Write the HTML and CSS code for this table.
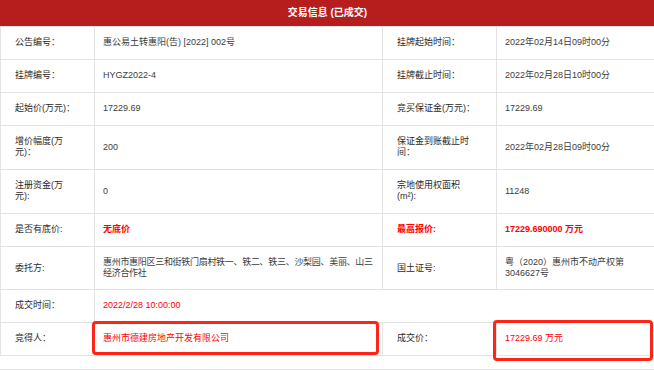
FILE: index.html
```html
<!DOCTYPE html>
<html lang="zh-CN">
<head>
<meta charset="utf-8">
<title>交易信息</title>
<link rel="stylesheet" href="styles.css">
</head>
<body>
<div class="panel">
  <div class="title">交易信息 (已成交)</div>
  <table class="info">
    <colgroup><col class="c1"><col class="c2"><col class="c3"><col class="c4"></colgroup>
    <tr>
      <td class="lab">公告编号：</td>
      <td class="val">惠公易土转惠阳(告) [2022] 002号</td>
      <td class="lab">挂牌起始时间：</td>
      <td class="val">2022年02月14日09时00分</td>
    </tr>
    <tr>
      <td class="lab">挂牌编号：</td>
      <td class="val">HYGZ2022-4</td>
      <td class="lab">挂牌截止时间：</td>
      <td class="val">2022年02月28日10时00分</td>
    </tr>
    <tr>
      <td class="lab">起始价(万元)：</td>
      <td class="val">17229.69</td>
      <td class="lab">竞买保证金(万元)：</td>
      <td class="val">17229.69</td>
    </tr>
    <tr>
      <td class="lab">增价幅度(万<br>元)：</td>
      <td class="val">200</td>
      <td class="lab">保证金到账截止时<br>间：</td>
      <td class="val">2022年02月28日09时00分</td>
    </tr>
    <tr>
      <td class="lab">注册资金(万<br>元):</td>
      <td class="val">0</td>
      <td class="lab">宗地使用权面积<br>(m²):</td>
      <td class="val">11248</td>
    </tr>
    <tr>
      <td class="lab">是否有底价:</td>
      <td class="val red bold">无底价</td>
      <td class="lab red bold">最高报价:</td>
      <td class="val red bold">17229.690000 万元</td>
    </tr>
    <tr class="tight">
      <td class="lab">委托方:</td>
      <td class="val narrow">惠州市惠阳区三和街铁门扇村铁一、铁二、铁三、沙梨园、美丽、山三<br>经济合作社</td>
      <td class="lab">国土证号:</td>
      <td class="val">粤（2020）惠州市不动产权第<br>3046627号</td>
    </tr>
    <tr>
      <td class="lab">成交时间：</td>
      <td class="val red" colspan="3">2022/2/28 10:00:00</td>
    </tr>
    <tr>
      <td class="lab">竞得人：</td>
      <td class="val red mark"><span class="box box-a"></span>惠州市德建房地产开发有限公司</td>
      <td class="lab">成交价：</td>
      <td class="val red mark"><span class="box box-b"></span>17229.69 万元</td>
    </tr>
  </table>
  <div class="tail"></div>
</div>
</body>
</html>
```

FILE: styles.css
```css
html, body {
  margin: 0;
  padding: 0;
  background: #ffffff;
  overflow: hidden;
}

.panel {
  width: 655px;
  font-family: "Liberation Sans", "Noto Sans CJK SC", sans-serif;
  font-size: 9px;
  color: #333333;
}

.title {
  height: 26px;
  line-height: 26px;
  background: #b51e1c;
  color: #ffffff;
  font-weight: bold;
  font-size: 10px;
  text-align: center;
}

.info {
  width: 655px;
  table-layout: fixed;
  border-collapse: collapse;
}

.c1 { width: 94px; }
.c2 { width: 288px; }
.c3 { width: 114px; }
.c4 { width: 159px; }

.info td {
  border: 1px solid #e3e3e3;
  line-height: 11px;
  padding: 10px 8px 11px 8px;
  vertical-align: middle;
  white-space: nowrap;
}

.info tr.tight td {
  padding-top: 10px;
  padding-bottom: 10px;
}

.info td.lab {
  padding-left: 14px;
  color: #2a2a2a;
}

.info td.val {
  color: #3c3c3c;
}

.info td.narrow {
  letter-spacing: -0.3px;
}

.info td.red {
  color: #ff0000;
}

.bold {
  font-weight: bold;
}

.mark {
  position: relative;
}

.box {
  position: absolute;
  border: 3px solid #ff2418;
  border-radius: 4px;
  pointer-events: none;
}

.box-a {
  left: -3px;
  top: -2px;
  right: 3px;
  bottom: 0px;
}

.box-b {
  left: -4px;
  top: -3px;
  right: 2px;
  bottom: -6px;
}

.tail {
  height: 13px;
  border-bottom: 1px solid #e3e3e3;
}
```
